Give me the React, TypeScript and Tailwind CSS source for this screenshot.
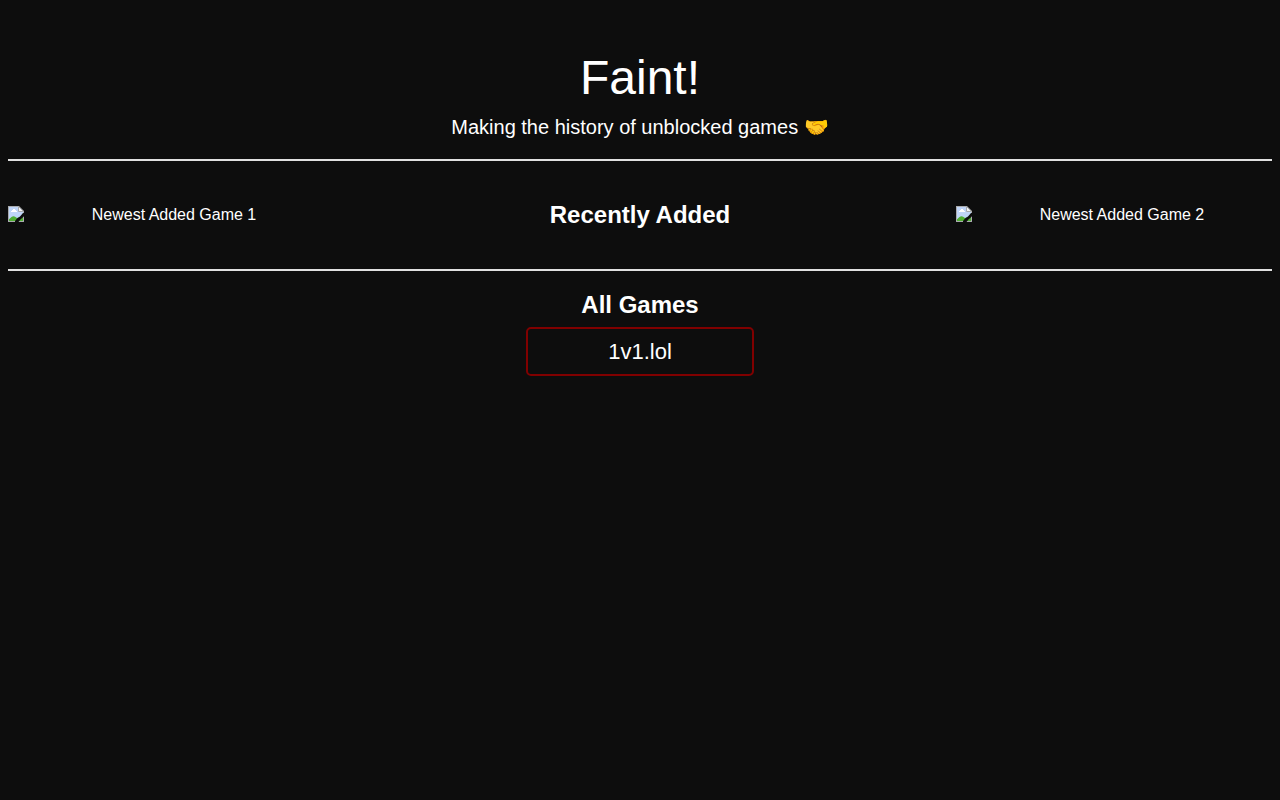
function BrokenImage() {
  return (
    <svg width="16" height="16" viewBox="0 0 16 16" className="block shrink-0 self-start" aria-hidden="true">
      <path d="M0 0H11L16 5V16H0Z" fill="#a9abae" />
      <path d="M1 1H10.5L15 5.5V15H1Z" fill="#c0d5f7" />
      <path d="M3 6V5H4V4H5V3H7V4H8V5H9V6Z" fill="#fff" />
      <path d="M1 15V13.2L3.5 11Q5.5 9.4 7.5 11L9 12L13 10.5L15 11.5V15Z" fill="#4fae32" />
      <path d="M10.5 0.5V5.5H15.5Z" fill="#f3f4f6" stroke="#a9abae" strokeWidth="1" />
      <path d="M16 7H15L12 10.5L9 12.5L7 15V16H10.5L12.5 13.5L16 10.5Z" fill="#0d0d0d" />
      <path d="M16 10.5L15 11.2V15H11.5L10.8 16H16Z" fill="#a9abae" />
      <path d="M15 11.8L12.6 13.8L11.8 15H15Z" fill="#4fae32" />
    </svg>
  );
}

function NewestGame({ label }: { label: string }) {
  return (
    <div className="flex w-[316px] items-center">
      <BrokenImage />
      <span className="flex-1 text-center text-base leading-[18px]">{label}</span>
    </div>
  );
}

export default function App() {
  return (
    <main className="min-h-screen bg-[#0d0d0d] px-2 pt-[50px] text-center font-['Liberation_Sans',Arial,sans-serif] text-white">
      <h1 className="text-5xl leading-[55px] font-normal">Faint!</h1>
      <p className="mt-[10px] text-xl leading-6">Making the history of unblocked games 🤝</p>
      <hr className="mt-5 h-[2px] border-0 bg-[#e0e0e0]" />
      <section className="flex h-[108px] items-center justify-between">
        <NewestGame label="Newest Added Game 1" />
        <h2 className="text-2xl leading-7 font-bold">Recently Added</h2>
        <NewestGame label="Newest Added Game 2" />
      </section>
      <hr className="h-[2px] border-0 bg-[#e0e0e0]" />
      <h2 className="mt-5 text-2xl leading-7 font-bold">All Games</h2>
      <a href="#" className="mx-auto mt-2 block w-[228px] rounded-[5px] border-2 border-[#800000] py-[10px] text-[22px] leading-[25px]">
        1v1.lol
      </a>
    </main>
  );
}
